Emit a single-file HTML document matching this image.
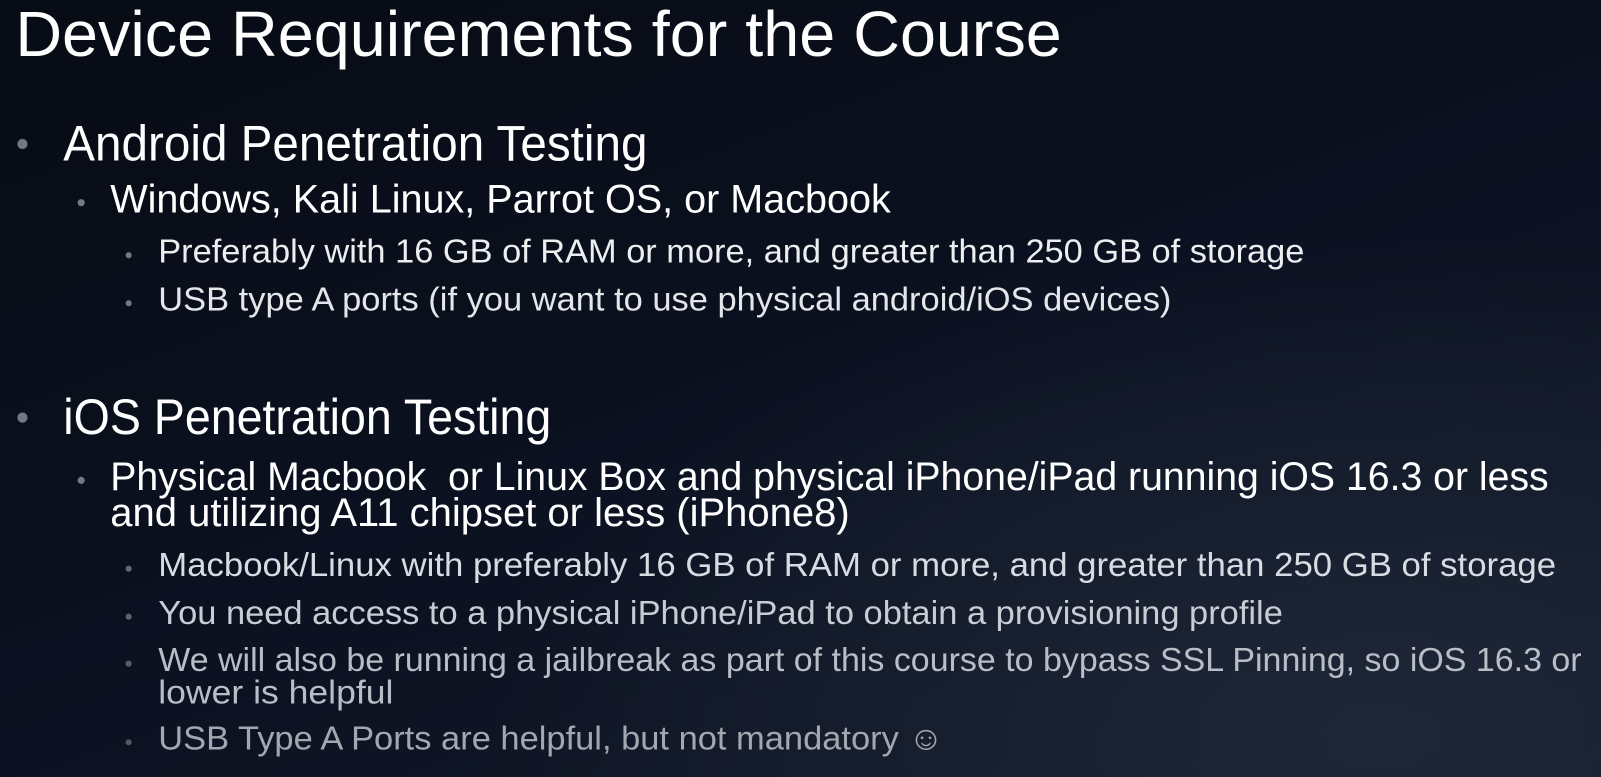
<!DOCTYPE html>
<html><head><meta charset="utf-8"><style>
html,body{margin:0;padding:0}
body{width:1601px;height:777px;overflow:hidden;position:relative;
background:radial-gradient(ellipse 900px 500px at 1380px 735px,#1e2738 0%,rgba(30,39,56,0) 100%),linear-gradient(160deg,#070b14 0%,#0b1120 50%,#141b2a 100%);
font-family:"Liberation Sans",sans-serif;color:#fff}
#w{position:absolute;left:0;top:0;width:1568px;height:761px;transform:scale(1.021);transform-origin:0 0}
.t{position:absolute;white-space:nowrap;line-height:1;transform-origin:0 0}
.b{position:absolute;border-radius:50%;background:#6f7a85}
</style></head><body><div id="w">
<div class="t" style="left:15px;top:3px;font-size:63px" data-w="1025">Device Requirements for the Course</div>

<div class="b" style="left:17px;top:136px;width:10px;height:10px"></div>
<div class="t" style="left:62px;top:117px;font-size:49px" data-w="572">Android Penetration Testing</div>
<div class="b" style="left:76px;top:195px;width:7px;height:7px"></div>
<div class="t" style="left:108px;top:176px;font-size:39px" data-w="764">Windows, Kali Linux, Parrot OS, or Macbook</div>
<div class="b" style="left:123px;top:247px;width:6px;height:6px"></div>
<div class="t" style="left:155px;top:229px;font-size:33px;color:#eceef0" data-w="1123">Preferably with 16 GB of RAM or more, and greater than 250 GB of storage</div>
<div class="b" style="left:123px;top:294px;width:6px;height:6px"></div>
<div class="t" style="left:155px;top:276px;font-size:33px;color:#e4e6ea" data-w="992">USB type A ports (if you want to use physical android/iOS devices)</div>

<div class="b" style="left:17px;top:404px;width:10px;height:10px"></div>
<div class="t" style="left:62px;top:385px;font-size:49px" data-w="478">iOS Penetration Testing</div>
<div class="b" style="left:76px;top:467px;width:7px;height:7px"></div>
<div class="t" style="left:108px;top:448px;font-size:39px" data-w="1409">Physical Macbook&nbsp; or Linux Box and physical iPhone/iPad running iOS 16.3 or less</div>
<div class="t" style="left:108px;top:483px;font-size:39px" data-w="724">and utilizing A11 chipset or less (iPhone8)</div>
<div class="b" style="left:123px;top:554px;width:6px;height:6px;background:#5f6873"></div>
<div class="t" style="left:155px;top:536px;font-size:33px;color:#d8dce2" data-w="1369">Macbook/Linux with preferably 16 GB of RAM or more, and greater than 250 GB of storage</div>
<div class="b" style="left:123px;top:601px;width:6px;height:6px;background:#5a636e"></div>
<div class="t" style="left:155px;top:583px;font-size:33px;color:#c8ccd3" data-w="1102">You need access to a physical iPhone/iPad to obtain a provisioning profile</div>
<div class="b" style="left:123px;top:647px;width:6px;height:6px;background:#555e69"></div>
<div class="t" style="left:155px;top:629px;font-size:33px;color:#b9bdc5" data-w="1394">We will also be running a jailbreak as part of this course to bypass SSL Pinning, so iOS 16.3 or</div>
<div class="t" style="left:155px;top:661px;font-size:33px;color:#b9bdc5" data-w="230">lower is helpful</div>
<div class="b" style="left:123px;top:724px;width:6px;height:6px;background:#4f5863"></div>
<div class="t" style="left:155px;top:706px;font-size:33px;color:#a3a8b0" data-w="769">USB Type A Ports are helpful, but not mandatory ☺</div>
</div>
<script>
document.querySelectorAll('.t').forEach(function(e){var w=+e.getAttribute('data-w');var r=e.offsetWidth;if(r>0)e.style.transform='scaleX('+(w/r)+')';});
</script>
</body></html>
